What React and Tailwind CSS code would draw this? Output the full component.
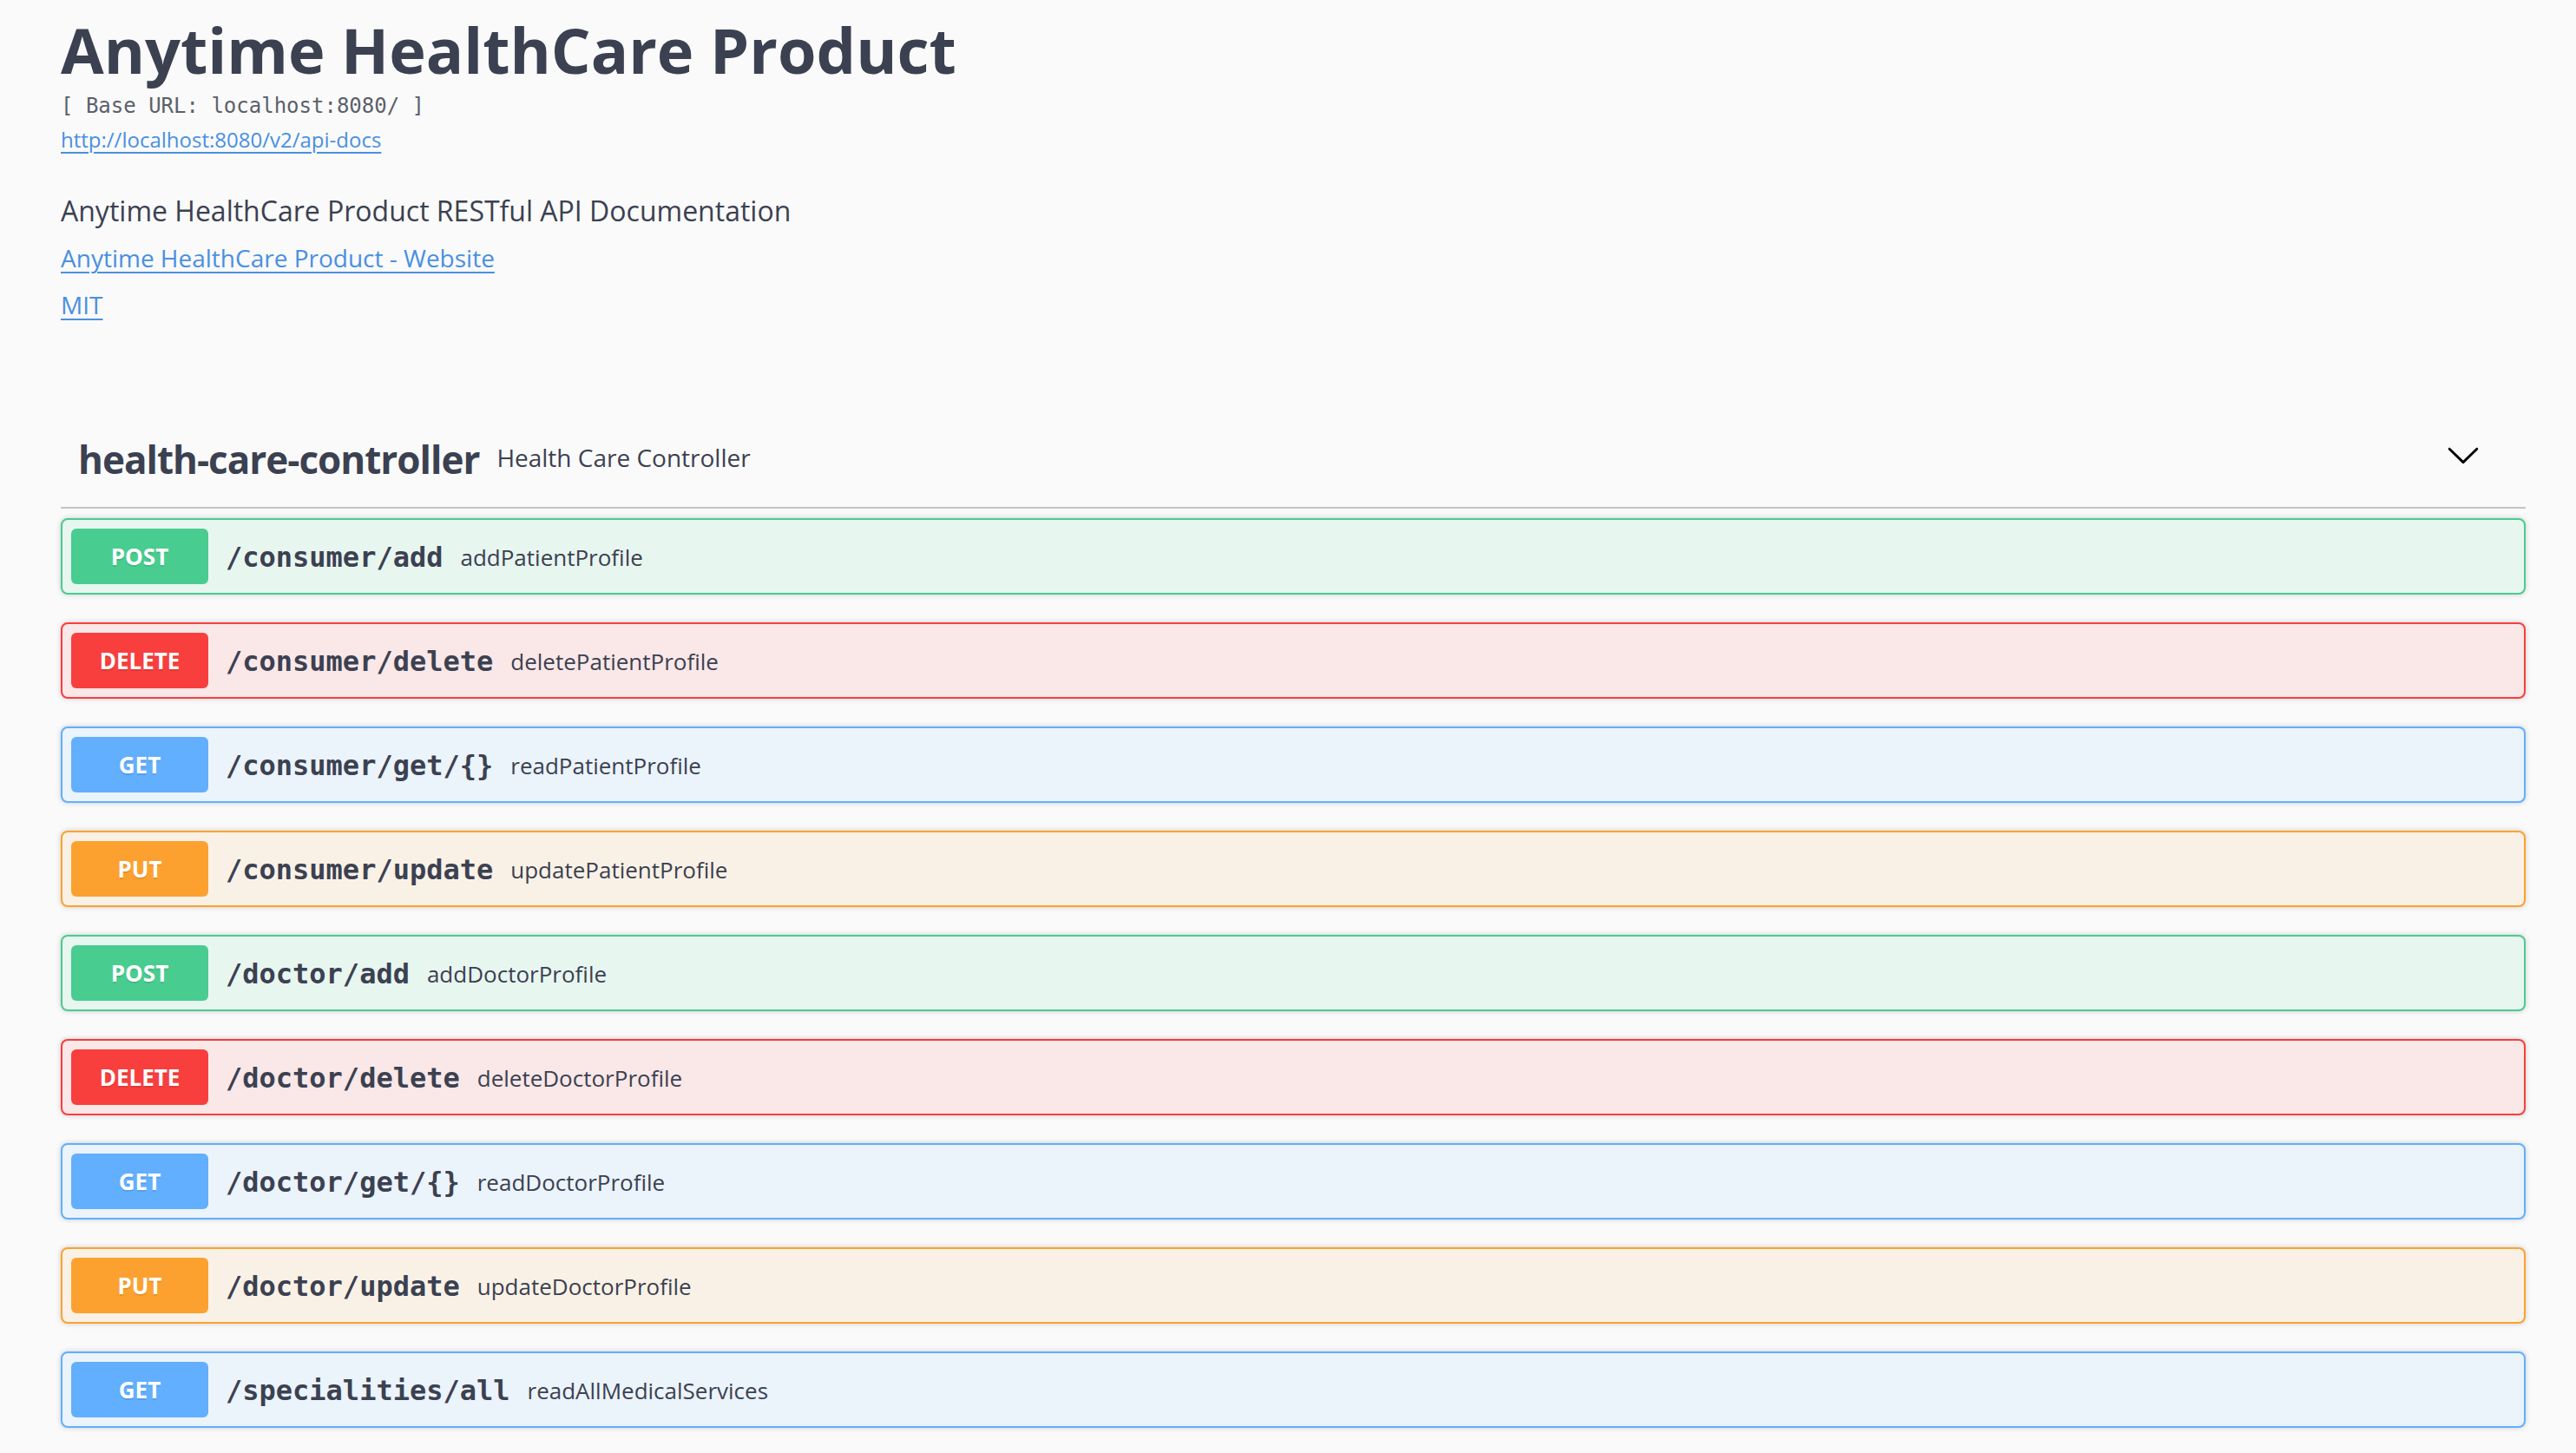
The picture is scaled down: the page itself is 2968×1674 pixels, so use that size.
import React from "react";

const ops = [
  { m: "POST", path: "/consumer/add", desc: "addPatientProfile" },
  { m: "DELETE", path: "/consumer/delete", desc: "deletePatientProfile" },
  { m: "GET", path: "/consumer/get/{}", desc: "readPatientProfile" },
  { m: "PUT", path: "/consumer/update", desc: "updatePatientProfile" },
  { m: "POST", path: "/doctor/add", desc: "addDoctorProfile" },
  { m: "DELETE", path: "/doctor/delete", desc: "deleteDoctorProfile" },
  { m: "GET", path: "/doctor/get/{}", desc: "readDoctorProfile" },
  { m: "PUT", path: "/doctor/update", desc: "updateDoctorProfile" },
  { m: "GET", path: "/specialities/all", desc: "readAllMedicalServices" },
];

const styles = {
  POST: { block: "bg-[#e8f6f0] border-[#49cc90]", badge: "bg-[#49cc90]" },
  DELETE: { block: "bg-[#fae7e7] border-[#f93e3e]", badge: "bg-[#f93e3e]" },
  GET: { block: "bg-[#ebf3fb] border-[#61affe]", badge: "bg-[#61affe]" },
  PUT: { block: "bg-[#faf1e6] border-[#fca130]", badge: "bg-[#fca130]" },
};

function Op({ m, path, desc }) {
  const s = styles[m];
  return (
    <div
      className={`h-[88px] mb-[32px] border-2 rounded-[8px] shadow-[0_0_6px_rgba(0,0,0,0.19)] flex items-center px-[10px] pt-[2px] ${s.block}`}
    >
      <div
        className={`w-[158px] h-[64px] -mt-[2px] rounded-[6px] flex items-center justify-center text-white font-bold text-[26px] [text-shadow:0_2px_0_rgba(0,0,0,0.1)] ${s.badge}`}
        style={{ fontFamily: "'Open Sans', sans-serif" }}
      >
        {m}
      </div>
      <span
        className="text-[32px] font-bold text-[#3b4151] pl-[20px] pr-[20px]"
        style={{ fontFamily: "'DejaVu Sans Mono', monospace" }}
      >
        {path}
      </span>
      <span
        className="text-[26px] text-[#3b4151]"
        style={{ fontFamily: "'Open Sans', sans-serif" }}
      >
        {desc}
      </span>
    </div>
  );
}

export default function App() {
  return (
    <div
      className="min-h-[1674px] bg-[#fafafa] pl-[70px] pr-[58px] text-[#3b4151]"
      style={{ fontFamily: "'Open Sans', sans-serif" }}
    >
      <div className="pt-[17px]">
        <h1 className="text-[72px] leading-[80px] font-bold text-[#3b4151]">
          Anytime HealthCare Product
        </h1>
        <div
          className="mt-[9px] text-[24px] leading-[32px] font-light text-[#5b606c]"
          style={{ fontFamily: "'DejaVu Sans Mono', monospace" }}
        >
          [ Base URL: localhost:8080/ ]
        </div>
        <div className="mt-[7px] text-[24px] leading-[32px]">
          <a href="#" className="text-[#4990e2] underline underline-offset-[5px] decoration-2">
            http://localhost:8080/v2/api-docs
          </a>
        </div>
        <p className="mt-[44px] text-[32px] leading-[44px] text-[#3b4151]">
          Anytime HealthCare Product RESTful API Documentation
        </p>
        <div className="mt-[12px] text-[28px] leading-[40px]">
          <a href="#" className="text-[#4990e2] underline underline-offset-[5px] decoration-2">
            Anytime HealthCare Product - Website
          </a>
        </div>
        <div className="mt-[14px] text-[28px] leading-[40px]">
          <a href="#" className="text-[#4990e2] underline underline-offset-[5px] decoration-2">
            MIT
          </a>
        </div>
      </div>

      <div className="mt-[99px]">
        <div className="h-[116px] border-b-2 border-[#c1c3c7] flex items-center pl-[20px] pr-[52px]">
          <span className="text-[44px] leading-[48px] font-bold tracking-[-1px] text-[#3b4151] mt-[4px]">
            health-care-controller
          </span>
          <span className="flex-1 pl-[20px] text-[28px] leading-[42px] text-[#3b4151]">
            Health Care Controller
          </span>
          <svg width="40" height="40" viewBox="0 0 20 20" className="-mt-[6px]">
            <path
              fill="#000"
              d="M17.418 6.109c.272-.268.709-.268.979 0s.271.701 0 .969l-7.908 7.83c-.27.268-.707.268-.979 0l-7.908-7.83c-.27-.268-.27-.701 0-.969.271-.268.709-.268.979 0L10 13.25l7.418-7.141z"
            />
          </svg>
        </div>
        <div className="mt-[11px]">
          {ops.map((o, i) => (
            <Op key={i} {...o} />
          ))}
        </div>
      </div>
    </div>
  );
}
